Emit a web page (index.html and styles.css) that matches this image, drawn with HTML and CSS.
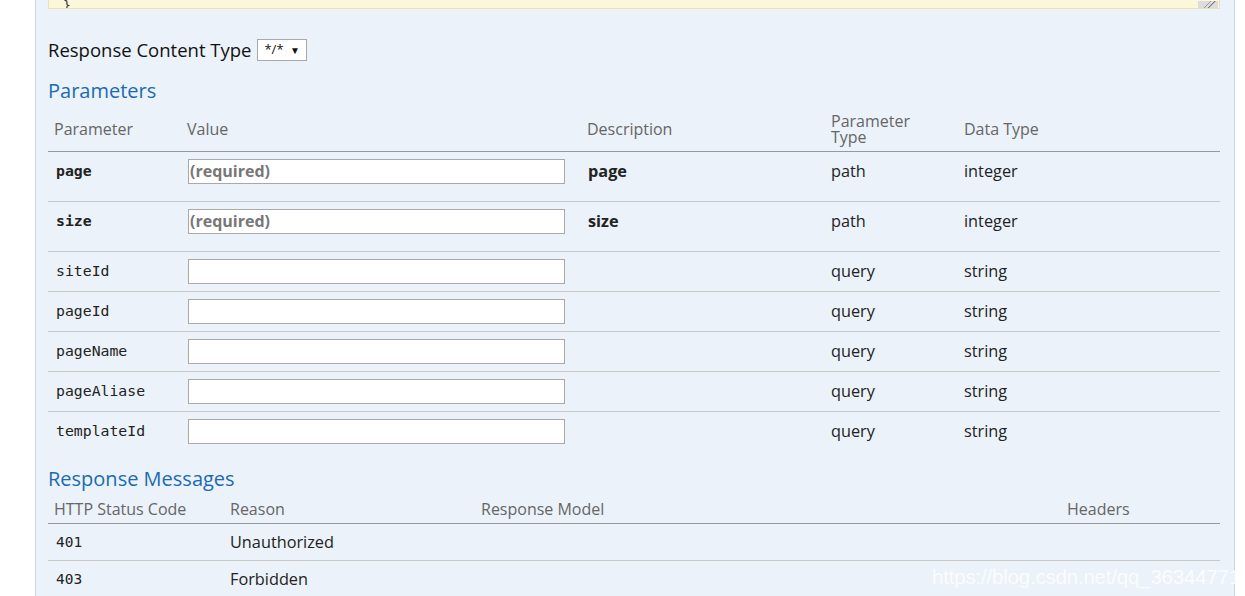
FILE: index.html
```html
<!DOCTYPE html>
<html>
<head>
<meta charset="utf-8">
<link rel="stylesheet" href="styles.css">
</head>
<body>
<div class="panel">
  <div class="sample"><span class="brace">}</span><span class="grip"></span></div>
  <div class="ctype">
    <span>Response Content Type</span>
    <span class="select">*/* <span class="caret">&#9660;</span></span>
  </div>
  <h4 class="heading">Parameters</h4>
  <table class="params">
    <colgroup>
      <col class="c1"><col class="c2"><col class="c3"><col class="c4"><col class="c5">
    </colgroup>
    <thead>
      <tr>
        <th>Parameter</th>
        <th>Value</th>
        <th>Description</th>
        <th class="ptype">Parameter<br>Type</th>
        <th>Data Type</th>
      </tr>
    </thead>
    <tbody>
      <tr class="req">
        <td class="code strong">page</td>
        <td><div class="input ph">(required)</div></td>
        <td class="strong">page</td>
        <td>path</td>
        <td>integer</td>
      </tr>
      <tr class="req">
        <td class="code strong">size</td>
        <td><div class="input ph">(required)</div></td>
        <td class="strong">size</td>
        <td>path</td>
        <td>integer</td>
      </tr>
      <tr>
        <td class="code">siteId</td>
        <td><div class="input"></div></td>
        <td></td>
        <td>query</td>
        <td>string</td>
      </tr>
      <tr>
        <td class="code">pageId</td>
        <td><div class="input"></div></td>
        <td></td>
        <td>query</td>
        <td>string</td>
      </tr>
      <tr>
        <td class="code">pageName</td>
        <td><div class="input"></div></td>
        <td></td>
        <td>query</td>
        <td>string</td>
      </tr>
      <tr>
        <td class="code">pageAliase</td>
        <td><div class="input"></div></td>
        <td></td>
        <td>query</td>
        <td>string</td>
      </tr>
      <tr class="last">
        <td class="code">templateId</td>
        <td><div class="input"></div></td>
        <td></td>
        <td>query</td>
        <td>string</td>
      </tr>
    </tbody>
  </table>
  <h4 class="heading heading2">Response Messages</h4>
  <table class="msgs">
    <colgroup>
      <col class="m1"><col class="m2"><col class="m3"><col class="m4">
    </colgroup>
    <thead>
      <tr>
        <th>HTTP Status Code</th>
        <th>Reason</th>
        <th>Response Model</th>
        <th>Headers</th>
      </tr>
    </thead>
    <tbody>
      <tr>
        <td class="code">401</td>
        <td>Unauthorized</td>
        <td></td>
        <td></td>
      </tr>
      <tr class="last">
        <td class="code">403</td>
        <td>Forbidden</td>
        <td></td>
        <td></td>
      </tr>
    </tbody>
  </table>
  <div class="watermark">https://blog.csdn.net/qq_36344771</div>
</div>
</body>
</html>
```
FILE: styles.css
```css
html, body {
  margin: 0;
  padding: 0;
  background: #ffffff;
}
body {
  font-family: "Open Sans", "Noto Sans", sans-serif;
  color: #222;
  height: 596px;
  overflow: hidden;
}
.panel {
  position: relative;
  margin-left: 35px;
  width: 1172px;
  height: 596px;
  background: #ebf2f9;
  border-left: 1px solid #c5d9ea;
  border-right: 1px solid #c5d9ea;
  padding: 0 14px 0 12px;
  box-sizing: content-box;
}
.sample {
  height: 8px;
  background: #fcf6db;
  border: 1px solid #e8e2bb;
  border-top: none;
  overflow: hidden;
  display: flex;
  justify-content: space-between;
  align-items: flex-end;
}
.brace {
  font-family: "DejaVu Sans Mono", monospace;
  font-size: 13px;
  line-height: 13px;
  margin-left: 14px;
  margin-bottom: -4px;
  color: #333;
}
.grip {
  width: 20px;
  height: 7px;
  background: linear-gradient(135deg, #dcdcdc 0%, #dcdcdc 45%, #777 46%, #dcdcdc 52%, #dcdcdc 62%, #777 63%, #dcdcdc 69%);
  margin-right: 1px;
}
.ctype {
  display: flex;
  align-items: center;
  gap: 6px;
  margin-top: 30px;
  font-size: 18.5px;
  line-height: 22px;
  color: #111;
}
.select {
  display: inline-block;
  height: 20px;
  line-height: 19px;
  padding: 0 6px 0 6px;
  font-size: 13px;
  background: #fff;
  border: 1px solid #a9a9a9;
  color: #111;
}
.caret {
  font-size: 10px;
  margin-left: 3px;
}
.heading {
  margin: 18px 0 0 0;
  font-weight: normal;
  font-size: 20px;
  line-height: 24px;
  color: #1a6bb3;
}
.heading2 {
  margin-top: 16px;
}
table {
  width: 1172px;
  border-collapse: collapse;
  table-layout: fixed;
}
.c1 { width: 133px; }
.c2 { width: 400px; }
.c3 { width: 244px; }
.c4 { width: 133px; }
.c5 { width: 262px; }
.m1 { width: 176px; }
.m2 { width: 251px; }
.m3 { width: 586px; }
.m4 { width: 159px; }
th {
  text-align: left;
  font-weight: normal;
  color: #666;
  font-size: 16px;
  line-height: 16px;
  padding: 0 6px;
  vertical-align: middle;
}
.params thead tr {
  height: 48px;
}
.params thead th {
  padding-top: 9px;
  padding-bottom: 4px;
  border-bottom: 1px solid #999;
}
.ptype {
  line-height: 16px;
}
td {
  font-size: 16.3px;
  padding: 0 6px;
  vertical-align: top;
  line-height: 20px;
  border-bottom: 1px solid #c8c8c8;
}
.params tbody tr td {
  padding-top: 9px;
  height: 30px;
}
.params tbody tr.req td {
  height: 40px;
}
tr.last td {
  border-bottom: none;
}
.code {
  font-family: "DejaVu Sans Mono", monospace;
  font-size: 14.8px;
  padding-left: 8px;
}
.strong {
  font-weight: bold;
}
td.strong {
  font-size: 16.3px;
  padding-left: 7px;
}
td.code.strong {
  font-size: 14.8px;
  padding-left: 8px;
}
.input {
  margin-top: -2px;
  height: 23px;
  width: 375px;
  margin-left: 1px;
  background: #fff;
  border: 1px solid #a9a9a9;
  box-sizing: content-box;
  font-size: 16px;
  line-height: 23px;
}
.ph {
  color: #777;
  font-weight: bold;
  padding-left: 1px;
  width: 374px;
}
.msgs {
  margin-top: 2px;
}
.msgs thead th {
  height: 22px;
  padding-top: 5px;
  padding-bottom: 3px;
  border-bottom: 1px solid #999;
}
.msgs tbody td {
  padding-top: 8px;
  height: 28px;
}
.msgs .code {
  font-size: 14.5px;
}
.watermark {
  position: absolute;
  left: 896px;
  top: 565px;
  font-family: "Liberation Sans", sans-serif;
  font-size: 20.5px;
  color: rgba(255, 255, 255, 0.8);
  white-space: nowrap;
  letter-spacing: -0.2px;
}
```
